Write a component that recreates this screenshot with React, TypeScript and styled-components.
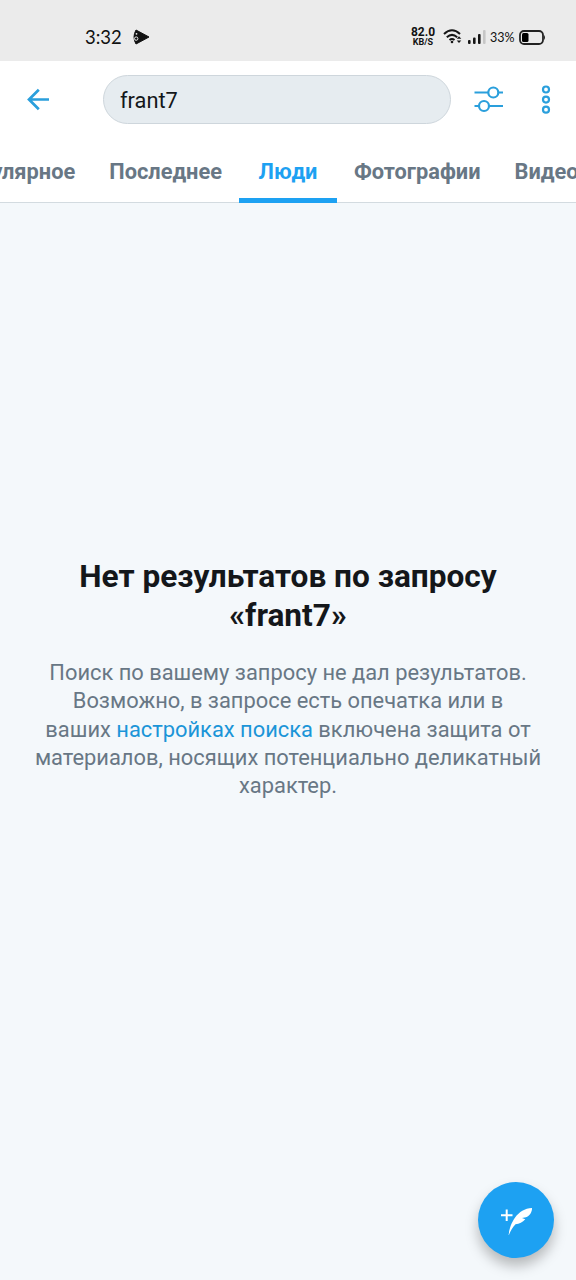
import React from "react";
import styled, { createGlobalStyle, css } from "styled-components";

const GlobalStyle = createGlobalStyle`
  :root {
    --accent-color: #1da1f2;
    --icon-color: #2a9fdc;
    --muted-color: #687785;
    --text-color: #14171a;
    --background-color: #f4f8fb;
  }

  * {
    box-sizing: border-box;
  }

  body {
    margin: 0;
    background: var(--background-color);
    color: var(--text-color);
    font-family: Roboto, "Liberation Sans", sans-serif;
  }
`;

const Screen = styled.div`
  display: flex;
  flex-direction: column;
  width: 576px;
  height: 1280px;
  overflow: hidden;
  position: relative;
  background: var(--background-color);
`;

const StatusBar = styled.div`
  display: flex;
  align-items: center;
  flex: none;
  height: 61px;
  padding: 13px 30px 0 85px;
  background: #ebebeb;
  color: #111;
`;

const Clock = styled.time`
  font-family: Lato, sans-serif;
  font-size: 18.5px;
  line-height: 24px;
  width: 37px;
  margin-right: 11px;
`;

const StatusIcons = styled.div`
  display: flex;
  align-items: center;
  margin-left: auto;
`;

const NetworkSpeed = styled.div`
  width: 26px;
  margin-right: 7px;
  font-size: 12px;
  font-weight: 700;
  line-height: 11px;
  text-align: center;
  white-space: nowrap;
`;

const SpeedUnit = styled.div`
  font-size: 9px;
  line-height: 9px;
`;

const BatteryLevel = styled.span`
  width: 25px;
  margin: 0 4px 0 4px;
  font-family: Lato, sans-serif;
  font-size: 12.5px;
  white-space: nowrap;
`;

const Toolbar = styled.header`
  display: flex;
  align-items: center;
  flex: none;
  height: 77px;
  padding: 0 18px 0 26px;
  background: #fff;
`;

const IconButton = styled.button`
  display: flex;
  padding: 0;
  border: 0;
  background: none;
  color: var(--icon-color);
`;

const SearchField = styled.div`
  width: 348px;
  height: 49px;
  margin: 0 22px 0 53px;
  padding: 0 16px;
  border: 1px solid #ced6dc;
  border-radius: 25px;
  background: #e6ecf0;
  font-size: 21.8px;
  line-height: 49px;
`;

const MenuButton = styled(IconButton)`
  margin-left: auto;
`;

const Tabs = styled.nav`
  display: flex;
  justify-content: center;
  flex: none;
  height: 65px;
  padding-right: 46px;
  border-bottom: 1px solid #d3dbe0;
  background: #fff;
`;

const Tab = styled.a<{ $active?: boolean }>`
  flex: none;
  height: 65px;
  min-width: 98px;
  padding: 0 17px;
  color: var(--muted-color);
  font-size: 21.8px;
  font-weight: 700;
  line-height: 67px;
  text-align: center;

  ${({ $active }) =>
    $active &&
    css`
      color: var(--accent-color);
      box-shadow: inset 0 -5px 0 var(--accent-color);
    `}
`;

const EmptyState = styled.main`
  padding: 354px 20px 0;
  text-align: center;
`;

const EmptyTitle = styled.h1`
  margin: 0 0 24px;
  font-size: 31.6px;
  font-weight: 700;
  line-height: 39px;
`;

const EmptyText = styled.p`
  margin: 0;
  color: var(--muted-color);
  font-size: 21.86px;
  line-height: 28.3px;
  white-space: nowrap;
`;

const SettingsLink = styled.a`
  color: #1b95d8;
`;

const ComposeButton = styled.button`
  display: flex;
  align-items: center;
  justify-content: center;
  position: absolute;
  right: 22px;
  bottom: 22px;
  width: 76px;
  height: 76px;
  padding: 0;
  border: 0;
  border-radius: 50%;
  background: var(--accent-color);
  box-shadow: 0 8px 13px rgba(0, 0, 0, 0.26);
`;

const PlayBadge = () => (
  <svg width="18" height="18" viewBox="0 0 18 18">
    <path d="M3 2 L16 9 L3 16 Q-1 9 3 2Z" fill="#111" stroke="#111" strokeLinejoin="round" />
    <circle cx="3.5" cy="5.8" r="0.9" fill="#ebebeb" />
    <circle cx="3.2" cy="10.6" r="1.7" fill="none" stroke="#ebebeb" />
  </svg>
);

const WifiIcon = () => (
  <svg width="25" height="18" viewBox="0 0 25 18" fill="none" stroke="#151515" strokeWidth="2">
    <path d="M1 6 Q9 -1.5 17 6M3.8 9.2 Q9 4.5 14.2 9.2M6.5 12 Q9 10 11.5 12" />
    <circle cx="9" cy="14" r="1.3" fill="#151515" stroke="none" />
    <path d="M13.7 10.8 L16 8.2 L18.3 10.8ZM13.7 12.4 L16 15 L18.3 12.4Z" fill="#151515" stroke="none" />
  </svg>
);

const SignalIcon = () => (
  <svg width="18" height="14" viewBox="0 0 18 14" fill="#151515">
    <rect x="0" y="10" width="2.6" height="4" rx="1" />
    <rect x="5" y="7.5" width="2.6" height="6.5" rx="1" />
    <rect x="10" y="4" width="2.6" height="10" rx="1" />
    <rect x="15" y="0" width="2.6" height="14" rx="1" fill="#c6c6c6" />
  </svg>
);

const BatteryIcon = () => (
  <svg width="27" height="15" viewBox="0 0 27 15">
    <rect x="1" y="1" width="23" height="13" rx="4" fill="none" stroke="#222" strokeWidth="1.8" />
    <rect x="3" y="3" width="6.5" height="9" rx="1.5" fill="#000" />
    <path d="M25 5 Q27 7.5 25 10Z" fill="#222" />
  </svg>
);

const BackIcon = () => (
  <svg width="24" height="24" viewBox="0 0 24 24" fill="none" stroke="currentColor" strokeWidth="2.7">
    <path d="M23 11.5H3M12.8 1.7 L3 11.5 L12.8 21.3" />
  </svg>
);

const FiltersIcon = () => (
  <svg width="32" height="28" viewBox="0 0 32 28" fill="none" stroke="currentColor" strokeWidth="2.2">
    <path d="M1.5 6.5H15M25 6.5H30M1.5 20H6M16 20H30" />
    <circle cx="20.3" cy="6.5" r="5" />
    <circle cx="11" cy="20" r="5" />
  </svg>
);

const MoreIcon = () => (
  <svg width="24" height="30" viewBox="0 0 24 30" fill="none" stroke="currentColor" strokeWidth="2.2">
    <circle cx="12" cy="4.5" r="3" />
    <circle cx="12" cy="14.6" r="3" />
    <circle cx="12" cy="24.7" r="3" />
  </svg>
);

const FeatherIcon = () => (
  <svg width="34" height="30" viewBox="0 0 34 30" fill="#fff">
    <path d="M2 10.2H13.5M7.7 4.5V16" stroke="#fff" strokeWidth="2" />
    <path d="M9.5 31 C10.5 19 18 3.5 33 3 C33.2 7.2 30.5 10.8 27 12.2 L23 13 L26.3 14.3 C23.5 17.5 20.5 19 16.5 19.2 C13.5 22 11.5 26 9.5 31Z" />
  </svg>
);

const TABS = ["Популярное", "Последнее", "Люди", "Фотографии", "Видео"];

const App = () => (
  <>
    <GlobalStyle />
    <Screen>
      <StatusBar>
        <Clock>3:32</Clock>
        <PlayBadge />
        <StatusIcons>
          <NetworkSpeed>
            82.0
            <SpeedUnit>KB/S</SpeedUnit>
          </NetworkSpeed>
          <WifiIcon />
          <SignalIcon />
          <BatteryLevel>33%</BatteryLevel>
          <BatteryIcon />
        </StatusIcons>
      </StatusBar>

      <Toolbar>
        <IconButton aria-label="Назад">
          <BackIcon />
        </IconButton>
        <SearchField>frant7</SearchField>
        <IconButton aria-label="Фильтры">
          <FiltersIcon />
        </IconButton>
        <MenuButton aria-label="Ещё">
          <MoreIcon />
        </MenuButton>
      </Toolbar>

      <Tabs>
        {TABS.map((tab) => (
          <Tab key={tab} $active={tab === "Люди"}>
            {tab}
          </Tab>
        ))}
      </Tabs>

      <EmptyState>
        <EmptyTitle>
          Нет результатов по запросу
          <br />
          «frant7»
        </EmptyTitle>
        <EmptyText>
          Поиск по вашему запросу не дал результатов.
          <br />
          Возможно, в запросе есть опечатка или в
          <br />
          ваших <SettingsLink>настройках поиска</SettingsLink> включена защита от
          <br />
          материалов, носящих потенциально деликатный
          <br />
          характер.
        </EmptyText>
      </EmptyState>

      <ComposeButton aria-label="Новый твит">
        <FeatherIcon />
      </ComposeButton>
    </Screen>
  </>
);

export default App;
